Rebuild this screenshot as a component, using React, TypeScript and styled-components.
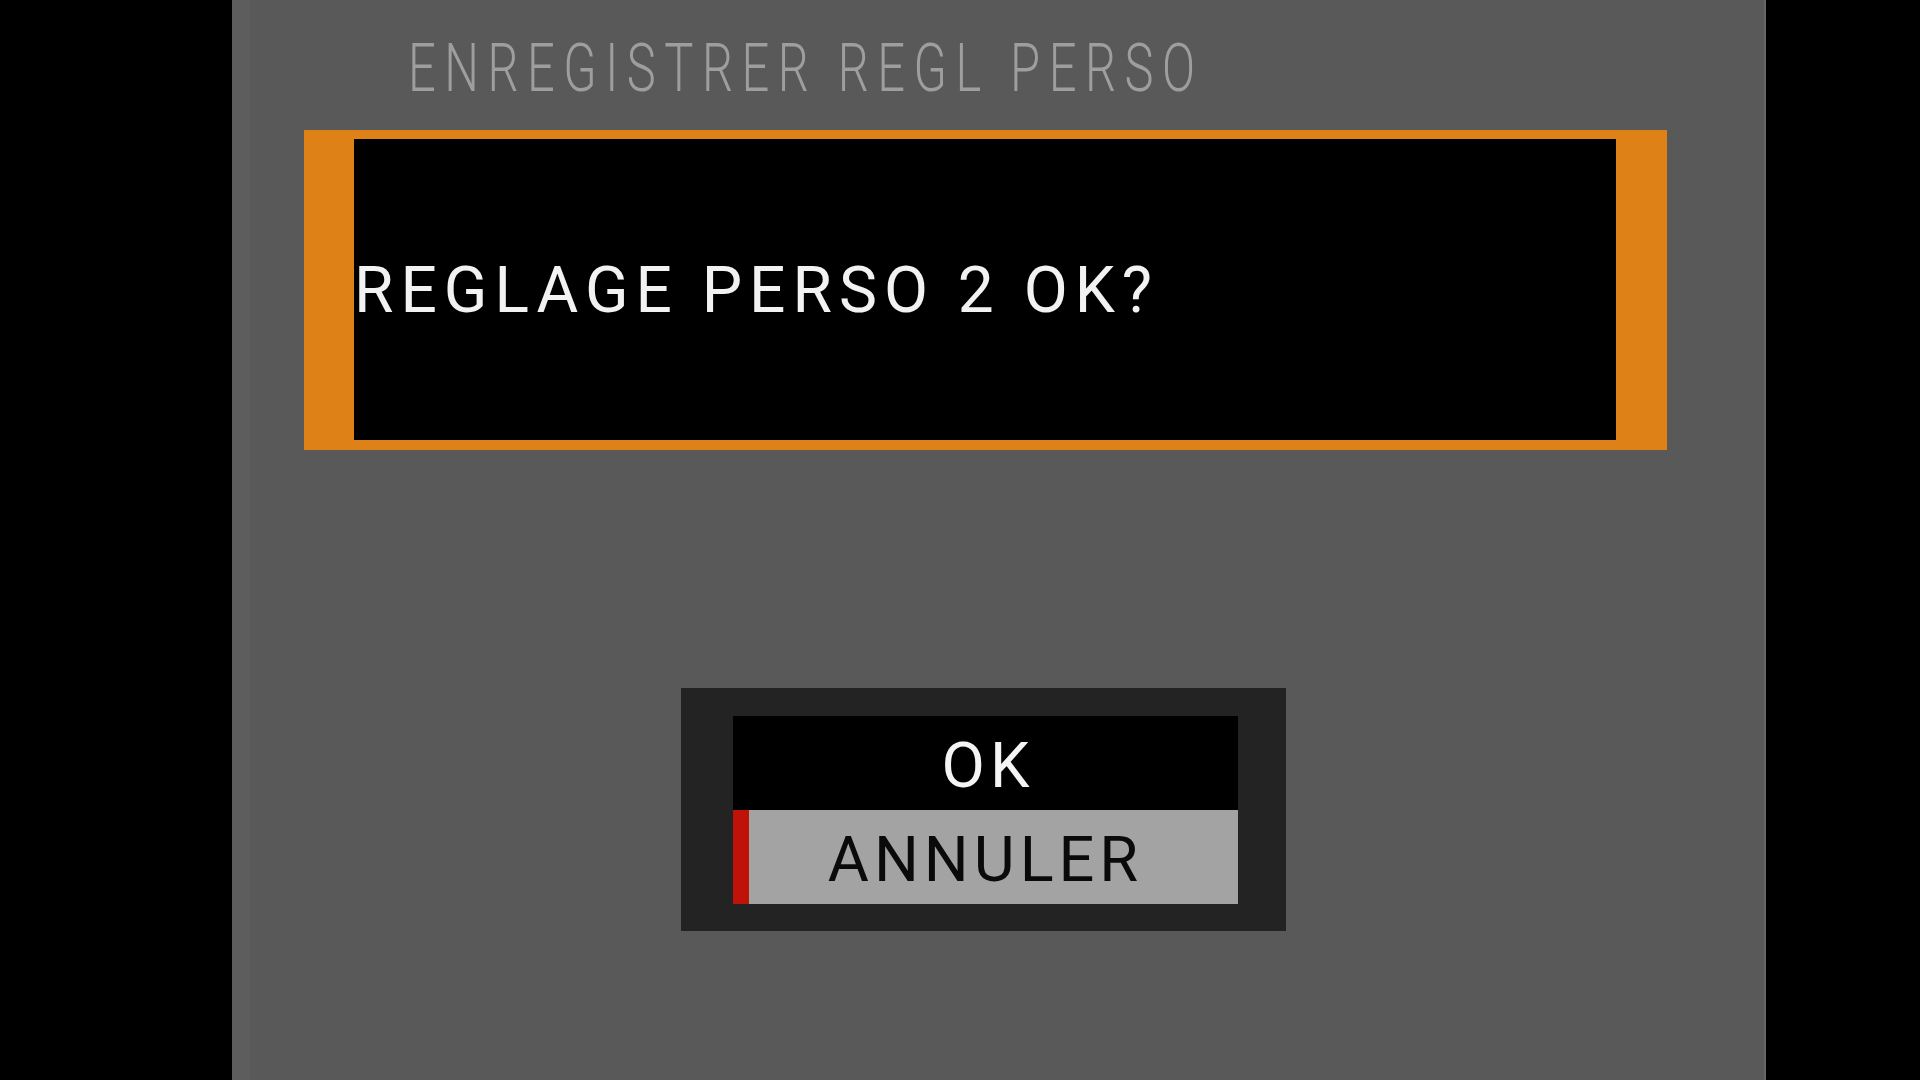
import React from 'react';
import styled, { createGlobalStyle } from 'styled-components';

const GlobalStyle = createGlobalStyle`
  html, body, #root {
    margin: 0;
    padding: 0;
    background: #000;
  }
  * {
    box-sizing: border-box;
  }
`;

const Screen = styled.div`
  display: flex;
  width: 1920px;
  height: 1080px;
  padding-left: 232px;
  background: #000;
  overflow: hidden;
`;

const Panel = styled.div`
  display: flex;
  flex-direction: column;
  width: 1534px;
  height: 100%;
  padding: 36px 0 0 54px;
  background: #595959;
  border-left: 18px solid #5d5d5d;
  border-right: 2px solid #676767;
`;

const Content = styled.div`
  display: flex;
  flex-direction: column;
  width: 1363px;
`;

const TitleRow = styled.div`
  height: 66px;
  padding-left: 104px;
  white-space: nowrap;
`;

const Title = styled.span`
  display: inline-block;
  font-family: Roboto, 'Liberation Sans', sans-serif;
  font-size: 66px;
  font-weight: 300;
  line-height: 1;
  letter-spacing: 11.5px;
  color: #9e9e9e;
  transform: scaleX(0.74);
  transform-origin: left center;
`;

const MessageBox = styled.div`
  display: flex;
  align-items: center;
  height: 320px;
  margin-top: 28px;
  padding-top: 3px;
  background: #000;
  border-style: solid;
  border-color: #de8116;
  border-width: 9px 51px 10px 50px;
`;

const Message = styled.div`
  font-family: Roboto, 'Liberation Sans', sans-serif;
  font-size: 64px;
  font-weight: 400;
  line-height: 1;
  letter-spacing: 7px;
  color: #f2f2f2;
  white-space: nowrap;
`;

const Dialog = styled.div`
  display: flex;
  flex-direction: column;
  width: 605px;
  margin: 238px 0 0 377px;
  padding: 28px 48px 27px 52px;
  background: #232323;
`;

const Option = styled.div<{ $selected?: boolean }>`
  display: flex;
  align-items: center;
  justify-content: center;
  height: 94px;
  padding: 4px 0 0 ${p => (p.$selected ? 0 : 5)}px;
  font-family: Roboto, 'Liberation Sans', sans-serif;
  font-size: 63px;
  font-weight: 400;
  line-height: 1;
  letter-spacing: 5px;
  color: ${p => (p.$selected ? '#0a0a0a' : '#f4f4f4')};
  background: ${p => (p.$selected ? '#a3a3a3' : '#000')};
  box-shadow: ${p => (p.$selected ? 'inset 16px 0 0 #bf1208' : 'none')};
`;

const options = [
  { label: 'OK', selected: false },
  { label: 'ANNULER', selected: true },
];

export default function App() {
  return (
    <Screen>
      <GlobalStyle />
      <Panel>
        <Content>
          <TitleRow>
            <Title>ENREGISTRER REGL PERSO</Title>
          </TitleRow>
          <MessageBox>
            <Message>REGLAGE PERSO 2 OK?</Message>
          </MessageBox>
          <Dialog>
            {options.map(o => (
              <Option key={o.label} $selected={o.selected}>
                {o.label}
              </Option>
            ))}
          </Dialog>
        </Content>
      </Panel>
    </Screen>
  );
}
